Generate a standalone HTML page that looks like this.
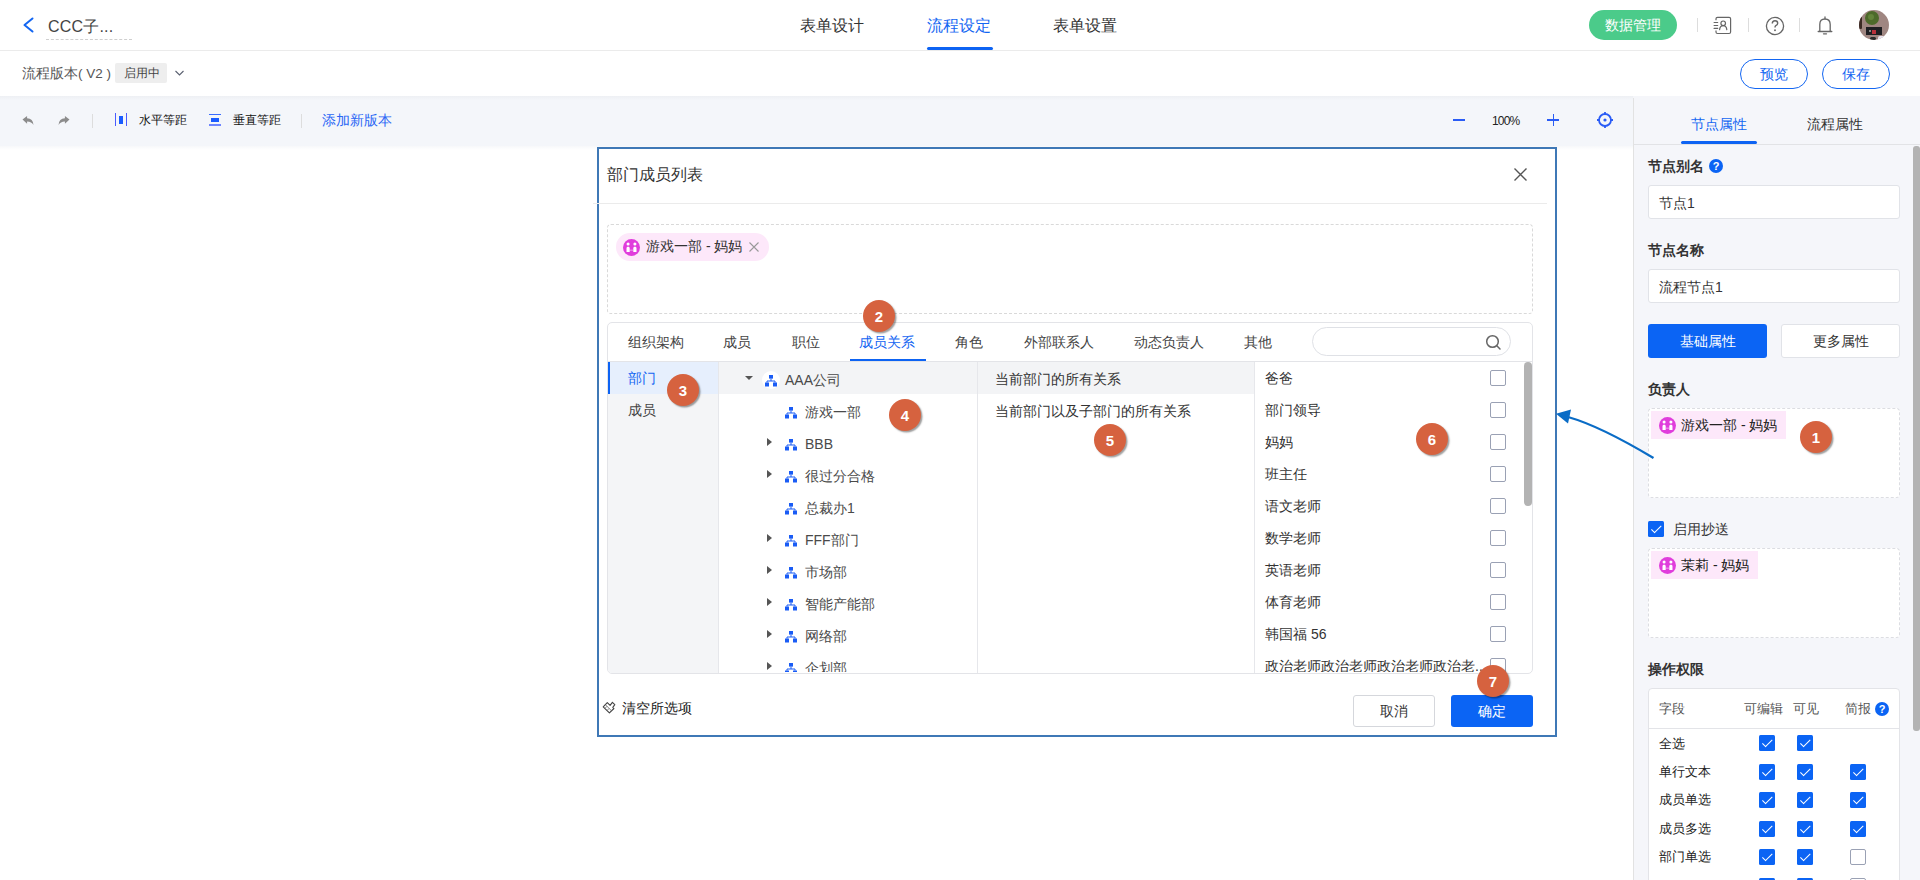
<!DOCTYPE html>
<html><head><meta charset="utf-8">
<style>
*{box-sizing:border-box;margin:0;padding:0}
html,body{width:1920px;height:880px;overflow:hidden;background:#fff;font-family:"Liberation Sans",sans-serif;color:#333}
.abs{position:absolute}
.t{position:absolute;white-space:nowrap;line-height:1}
.badge{position:absolute;width:32px;height:32px;border-radius:50%;background:#d6623f;color:#fff;font-weight:bold;font-size:15px;line-height:33px;text-align:center;box-shadow:1.5px 1.5px 1.5px rgba(0,0,0,.38)}
.cb{position:absolute;width:16px;height:16px;border:1px solid #9aa1b4;border-radius:2px;background:#fff}
.cbc{position:absolute;width:16px;height:16px;border-radius:1.5px;background:#0b64f4}
.cbc:after{content:"";position:absolute;left:5.5px;top:2px;width:4px;height:8.5px;border:solid #fff;border-width:0 1.7px 1.7px 0;transform:rotate(45deg)}
.org{position:absolute;width:12px;height:12px}
.caret-r{position:absolute;width:0;height:0;border-top:4.5px solid transparent;border-bottom:4.5px solid transparent;border-left:5px solid #555}
.tree{font-size:14px;color:#4a4a4a}
</style></head><body>
<!-- ============ header ============ -->
<div class="abs" style="left:0;top:0;width:1920px;height:51px;background:#fff;border-bottom:1px solid #ebebeb"></div>
<svg class="abs" style="left:20px;top:16px" width="16" height="18" viewBox="0 0 16 18"><path d="M12.5 2.5 L4.5 9 L12.5 15.5" fill="none" stroke="#1366f2" stroke-width="2" stroke-linecap="round" stroke-linejoin="round"/></svg>
<div class="t" style="left:48px;top:19px;font-size:16px;color:#444;letter-spacing:.2px">CCC子...</div>
<div class="abs" style="left:46px;top:39px;width:86px;border-top:1px dashed #cfcfcf"></div>
<div class="t" style="left:800px;top:18px;font-size:16px;color:#333">表单设计</div>
<div class="t" style="left:927px;top:18px;font-size:16px;color:#1366f2">流程设定</div>
<div class="abs" style="left:927px;top:47px;width:66px;height:3px;background:#0d63f3;border-radius:2px"></div>
<div class="t" style="left:1053px;top:18px;font-size:16px;color:#333">表单设置</div>
<div class="abs" style="left:1589px;top:10px;width:88px;height:30px;border-radius:15px;background:#4bcb8a"></div>
<div class="t" style="left:1589px;top:18px;width:88px;text-align:center;font-size:14px;color:#fff">数据管理</div>
<div class="abs" style="left:1697px;top:18px;width:1px;height:14px;background:#ddd"></div>
<div class="abs" style="left:1748px;top:18px;width:1px;height:14px;background:#ddd"></div>
<div class="abs" style="left:1799px;top:18px;width:1px;height:14px;background:#ddd"></div>
<!-- contact book icon -->
<svg class="abs" style="left:1706px;top:10px" width="34" height="30" viewBox="0 0 34 30"><path d="M10 10.3 V8.8 Q10 7.3 11.5 7.3 H23.1 Q24.6 7.3 24.6 8.8 V22 Q24.6 23.5 23.1 23.5 H11.5 Q10 23.5 10 22 V20.4" fill="none" stroke="#666" stroke-width="1.2"/><path d="M8.1 12.5 H11.7 M8.1 15.5 H11.7 M8.1 18.4 H11.7" stroke="#666" stroke-width="1.2" stroke-linecap="round"/><circle cx="17.2" cy="13.3" r="2.3" fill="none" stroke="#666" stroke-width="1.2"/><path d="M13.6 19.6 Q14 15.6 17.2 15.6 Q20.4 15.6 20.8 19.6" fill="none" stroke="#666" stroke-width="1.2" stroke-linecap="round"/></svg>
<!-- help icon -->
<svg class="abs" style="left:1764px;top:14.5px" width="22" height="22" viewBox="0 0 22 22"><circle cx="11" cy="11" r="8.6" fill="none" stroke="#666" stroke-width="1.3"/><path d="M8.3 8.6 Q8.3 5.8 11 5.8 Q13.7 5.8 13.7 8.3 Q13.7 9.8 11.8 10.7 Q11 11.2 11 12.6" fill="none" stroke="#666" stroke-width="1.4"/><circle cx="11" cy="15.3" r="0.95" fill="#666"/></svg>
<!-- bell -->
<svg class="abs" style="left:1814px;top:14px" width="22" height="22" viewBox="0 0 22 22"><path d="M4.2 17.5 H17.8 M5.8 17.5 V10.5 Q5.8 5 11 5 Q16.2 5 16.2 10.5 V17.5" fill="none" stroke="#666" stroke-width="1.3" stroke-linecap="round"/><path d="M11 3 V4.6 M9.5 19.8 H12.5" stroke="#666" stroke-width="1.3" stroke-linecap="round"/></svg>
<!-- avatar -->
<div class="abs" style="left:1859px;top:10px;width:30px;height:30px;border-radius:50%;overflow:hidden;background:#9f8681">
  <div class="abs" style="left:0;top:7px;width:3px;height:12px;background:#3b2a24;border-radius:1px"></div>
  <div class="abs" style="left:5.5px;top:1px;width:14px;height:14px;border-radius:50%;background:#4d6a2a"></div>
  <div class="abs" style="left:9px;top:4px;width:6px;height:6px;border-radius:50%;background:#63833a"></div>
  <div class="abs" style="left:7px;top:17px;width:15.5px;height:7.5px;background:#1e1e22"></div>
  <div class="abs" style="left:13px;top:20px;width:3.5px;height:4px;background:#b8303a"></div>
  <div class="abs" style="left:9.5px;top:19.5px;width:2px;height:2px;background:#aaa;border-radius:50%"></div>
  <div class="abs" style="left:11px;top:27px;width:6px;height:3px;background:#2a2a2a;border-radius:2px"></div>
  <div class="abs" style="left:19px;top:26px;width:8px;height:5px;background:#e9e4ee;border-radius:2px"></div>
</div>
<!-- ============ row2 ============ -->
<div class="t" style="left:22px;top:66.5px;font-size:13.5px;color:#555">流程版本( V2 )</div>
<div class="abs" style="left:115px;top:63px;width:52px;height:20px;background:#eee;border-radius:2px"></div>
<div class="t" style="left:124px;top:67px;font-size:12px;color:#444">启用中</div>
<svg class="abs" style="left:174px;top:68.5px" width="11" height="8" viewBox="0 0 11 8"><path d="M1.5 2 L5.5 6 L9.5 2" fill="none" stroke="#5a6070" stroke-width="1.1"/></svg>
<div class="abs" style="left:1740px;top:59px;width:68px;height:30px;border:1px solid #1366f2;border-radius:15px"></div>
<div class="t" style="left:1740px;top:67px;width:68px;text-align:center;font-size:14px;color:#1366f2">预览</div>
<div class="abs" style="left:1822px;top:59px;width:68px;height:30px;border:1px solid #1366f2;border-radius:15px"></div>
<div class="t" style="left:1822px;top:67px;width:68px;text-align:center;font-size:14px;color:#1366f2">保存</div>
<!-- ============ toolbar ============ -->
<div class="abs" style="left:0;top:96px;width:1634px;height:50px;background:linear-gradient(#eef0f4 0px,#f4f6fa 4px,#f4f6fa 100%)"></div><div class="abs" style="left:0;top:146px;width:1634px;height:4px;background:linear-gradient(#f7f8fa,#fff)"></div>
<svg class="abs" style="left:21px;top:114.5px" width="14" height="11" viewBox="0 0 14 12"><path d="M1 5 L6 1 V3.5 Q12.5 3.5 13 11 Q11 7 6 7 V9.5 Z" fill="#8c8c8c"/></svg>
<svg class="abs" style="left:57px;top:114.5px" width="14" height="11" viewBox="0 0 14 12"><path d="M13 5 L8 1 V3.5 Q1.5 3.5 1 11 Q3 7 8 7 V9.5 Z" fill="#8c8c8c"/></svg>
<div class="abs" style="left:92px;top:114px;width:1px;height:14px;background:#ddd"></div>
<div class="abs" style="left:115px;top:113px;width:1px;height:13px;background:#4a5cff"></div>
<div class="abs" style="left:119px;top:115.5px;width:4px;height:8px;background:#1a5cff"></div>
<div class="abs" style="left:126px;top:113px;width:1px;height:13px;background:#4a5cff"></div>
<div class="t" style="left:139px;top:114px;font-size:12px;color:#111">水平等距</div>
<div class="abs" style="left:209px;top:114px;width:12px;height:1px;background:#3a6cff"></div>
<div class="abs" style="left:211px;top:118px;width:8px;height:4px;background:#1a5cff"></div>
<div class="abs" style="left:209px;top:124px;width:12px;height:2px;background:#6f86ff"></div>
<div class="t" style="left:233px;top:114px;font-size:12px;color:#111">垂直等距</div>
<div class="abs" style="left:301px;top:114px;width:1px;height:14px;background:#ddd"></div>
<div class="t" style="left:322px;top:113px;font-size:14px;color:#2a66f5">添加新版本</div>
<div class="abs" style="left:1453px;top:119px;width:12px;height:1.5px;background:#2a5cf5"></div>
<div class="t" style="left:1492px;top:115px;font-size:12px;color:#222;letter-spacing:-.8px">100%</div>
<div class="abs" style="left:1547px;top:119px;width:12px;height:1.5px;background:#2a5cf5"></div>
<div class="abs" style="left:1552.5px;top:114px;width:1.5px;height:12px;background:#2a5cf5"></div>
<svg class="abs" style="left:1596px;top:111px" width="18" height="18" viewBox="0 0 18 18"><circle cx="9" cy="9" r="6" fill="none" stroke="#2a5cf5" stroke-width="1.8"/><circle cx="9" cy="9" r="1.6" fill="#2a5cf5"/><path d="M9 1v3M9 14v3M1 9h3M14 9h3" stroke="#2a5cf5" stroke-width="1.8"/></svg>
<!-- ============ right panel ============ -->
<div class="abs" style="left:1633px;top:96px;width:287px;height:784px;background:#f5f6fa"></div>
<div class="abs" style="left:1633px;top:98px;width:1px;height:782px;background:#e2e2e2"></div>
<div class="abs" style="left:1634px;top:144px;width:286px;height:1px;background:#e2e3e6"></div>
<div class="t" style="left:1691px;top:117px;font-size:14px;color:#1366f2">节点属性</div>
<div class="abs" style="left:1681px;top:141px;width:76px;height:3px;background:#0d63f3;border-radius:2px"></div>
<div class="t" style="left:1807px;top:117px;font-size:14px;color:#333">流程属性</div>
<div class="abs" style="left:1913px;top:146px;width:7px;height:585px;background:#b3b3b3;border-radius:3px"></div>

<div class="t" style="left:1648px;top:159px;font-size:14px;font-weight:bold;color:#333">节点别名</div>
<div class="abs" style="left:1709px;top:159px;width:14px;height:14px;border-radius:50%;background:#0b64f4;color:#fff;font-size:11px;font-weight:bold;text-align:center;line-height:14px">?</div>
<div class="abs" style="left:1648px;top:185px;width:252px;height:34px;background:#fff;border:1px solid #e1e3e8;border-radius:3px"></div>
<div class="t" style="left:1659px;top:196px;font-size:14px;color:#333">节点1</div>
<div class="t" style="left:1648px;top:243px;font-size:14px;font-weight:bold;color:#333">节点名称</div>
<div class="abs" style="left:1648px;top:269px;width:252px;height:34px;background:#fff;border:1px solid #e1e3e8;border-radius:3px"></div>
<div class="t" style="left:1659px;top:280px;font-size:14px;color:#333">流程节点1</div>
<div class="abs" style="left:1648px;top:324px;width:119px;height:34px;background:#0b64f4;border-radius:3px"></div>
<div class="t" style="left:1648px;top:334px;width:119px;text-align:center;font-size:14px;color:#fff">基础属性</div>
<div class="abs" style="left:1781px;top:324px;width:119px;height:34px;background:#fff;border:1px solid #e1e3e8;border-radius:3px"></div>
<div class="t" style="left:1781px;top:334px;width:119px;text-align:center;font-size:14px;color:#333">更多属性</div>
<div class="t" style="left:1648px;top:382px;font-size:14px;font-weight:bold;color:#333">负责人</div>
<div class="abs" style="left:1648px;top:408px;width:252px;height:90px;background:#fff;border:1px dashed #dcdde2;border-radius:4px"></div>
<div class="abs" style="left:1651px;top:411px;width:135px;height:28px;background:#fde8fa"></div>
<svg class="abs" style="left:1658.5px;top:416.5px" width="17" height="17" viewBox="0 0 16 16"><circle cx="8" cy="8" r="8" fill="#e03ddc"/><circle cx="4.8" cy="4.7" r="1.45" fill="#fff"/><circle cx="11.2" cy="4.7" r="1.45" fill="#fff"/><path d="M4.1 7.3h1.4l.8.9v4H3.3V8.2z M10.5 7.3h1.4l.8.9v4H9.7V8.2z" fill="#fff"/><path d="M6.4 10.5h3.2" stroke="#fff" stroke-width=".6" opacity=".8"/></svg>
<div class="t" style="left:1681px;top:418px;font-size:14px;color:#222">游戏一部 - 妈妈</div>
<div class="cbc" style="left:1648px;top:521px"></div>
<div class="t" style="left:1673px;top:522px;font-size:14px;color:#333">启用抄送</div>
<div class="abs" style="left:1648px;top:548px;width:252px;height:90px;background:#fff;border:1px dashed #dcdde2;border-radius:4px"></div>
<div class="abs" style="left:1651px;top:551px;width:107px;height:28px;background:#fde8fa"></div>
<svg class="abs" style="left:1658.5px;top:556.5px" width="17" height="17" viewBox="0 0 16 16"><circle cx="8" cy="8" r="8" fill="#e03ddc"/><circle cx="4.8" cy="4.7" r="1.45" fill="#fff"/><circle cx="11.2" cy="4.7" r="1.45" fill="#fff"/><path d="M4.1 7.3h1.4l.8.9v4H3.3V8.2z M10.5 7.3h1.4l.8.9v4H9.7V8.2z" fill="#fff"/><path d="M6.4 10.5h3.2" stroke="#fff" stroke-width=".6" opacity=".8"/></svg>
<div class="t" style="left:1681px;top:558px;font-size:14px;color:#222">茉莉 - 妈妈</div>
<div class="t" style="left:1648px;top:662px;font-size:14px;font-weight:bold;color:#333">操作权限</div>
<div class="abs" style="left:1648px;top:688px;width:252px;height:220px;background:#fff;border:1px solid #e3e4e8;border-radius:4px"></div>
<div class="abs" style="left:1649px;top:728px;width:250px;height:1px;background:#e3e4e8"></div>
<div class="t" style="left:1659px;top:702px;font-size:13px;color:#555">字段</div>
<div class="t" style="left:1744px;top:702px;font-size:13px;color:#555">可编辑</div>
<div class="t" style="left:1793px;top:702px;font-size:13px;color:#555">可见</div>
<div class="t" style="left:1845px;top:702px;font-size:13px;color:#555">简报</div>
<div class="abs" style="left:1875px;top:702px;width:14px;height:14px;border-radius:50%;background:#0b64f4;color:#fff;font-size:11px;font-weight:bold;text-align:center;line-height:14px">?</div>
<div class="t" style="left:1659px;top:737px;font-size:13px;color:#222">全选</div>
<div class="t" style="left:1659px;top:765px;font-size:13px;color:#222">单行文本</div>
<div class="t" style="left:1659px;top:793px;font-size:13px;color:#222">成员单选</div>
<div class="t" style="left:1659px;top:822px;font-size:13px;color:#222">成员多选</div>
<div class="t" style="left:1659px;top:850px;font-size:13px;color:#222">部门单选</div>
<div class="cbc" style="left:1759px;top:735px"></div><div class="cbc" style="left:1797px;top:735px"></div>
<div class="cbc" style="left:1759px;top:764px"></div><div class="cbc" style="left:1797px;top:764px"></div><div class="cbc" style="left:1850px;top:764px"></div>
<div class="cbc" style="left:1759px;top:792px"></div><div class="cbc" style="left:1797px;top:792px"></div><div class="cbc" style="left:1850px;top:792px"></div>
<div class="cbc" style="left:1759px;top:821px"></div><div class="cbc" style="left:1797px;top:821px"></div><div class="cbc" style="left:1850px;top:821px"></div>
<div class="cbc" style="left:1759px;top:849px"></div><div class="cbc" style="left:1797px;top:849px"></div><div class="cb" style="left:1850px;top:849px"></div>
<div class="cbc" style="left:1759px;top:878px"></div><div class="cbc" style="left:1797px;top:878px"></div><div class="cb" style="left:1850px;top:878px"></div>
<div class="badge" style="left:1800px;top:421px">1</div>

<!-- ============ dialog ============ -->
<div class="abs" style="left:597px;top:147px;width:960px;height:590px;background:#fff;border:2px solid #3f78b6"></div>
<div class="t" style="left:607px;top:167px;font-size:16px;font-weight:500;color:#333">部门成员列表</div>
<svg class="abs" style="left:1512px;top:166px" width="17" height="17" viewBox="0 0 17 17"><path d="M2.5 2.5L14.5 14.5M14.5 2.5L2.5 14.5" stroke="#555" stroke-width="1.4"/></svg>
<div class="abs" style="left:593px;top:203px;width:954px;height:1px;background:#ebebeb"></div>
<div class="abs" style="left:607px;top:224px;width:926px;height:90px;border:1px dashed #d9d9d9;border-radius:4px"></div>
<div class="abs" style="left:616px;top:233px;width:153px;height:28px;background:#fde8fa;border-radius:14px"></div>
<svg class="abs" style="left:623px;top:239px" width="17" height="17" viewBox="0 0 16 16"><circle cx="8" cy="8" r="8" fill="#e03ddc"/><circle cx="4.8" cy="4.7" r="1.45" fill="#fff"/><circle cx="11.2" cy="4.7" r="1.45" fill="#fff"/><path d="M4.1 7.3h1.4l.8.9v4H3.3V8.2z M10.5 7.3h1.4l.8.9v4H9.7V8.2z" fill="#fff"/><path d="M6.4 10.5h3.2" stroke="#fff" stroke-width=".6" opacity=".8"/></svg>
<div class="t" style="left:646px;top:239px;font-size:14px;color:#333">游戏一部 - 妈妈</div>
<svg class="abs" style="left:748px;top:241px" width="12" height="12" viewBox="0 0 12 12"><path d="M1.5 1.5L10.5 10.5M10.5 1.5L1.5 10.5" stroke="#999" stroke-width="1.1"/></svg>

<div class="abs" style="left:607px;top:322px;width:926px;height:352px;border:1px solid #e3e4e8;border-radius:5px"></div>
<div class="abs" style="left:608px;top:361px;width:924px;height:1px;background:#e3e4e8"></div>
<div class="t" style="left:628px;top:335px;font-size:14px;color:#444">组织架构</div>
<div class="t" style="left:723px;top:335px;font-size:14px;color:#444">成员</div>
<div class="t" style="left:792px;top:335px;font-size:14px;color:#444">职位</div>
<div class="t" style="left:859px;top:335px;font-size:14px;color:#1366f2">成员关系</div>
<div class="abs" style="left:850px;top:359px;width:76px;height:2px;background:#0d63f3"></div>
<div class="t" style="left:955px;top:335px;font-size:14px;color:#444">角色</div>
<div class="t" style="left:1024px;top:335px;font-size:14px;color:#444">外部联系人</div>
<div class="t" style="left:1134px;top:335px;font-size:14px;color:#444">动态负责人</div>
<div class="t" style="left:1244px;top:335px;font-size:14px;color:#444">其他</div>
<div class="abs" style="left:1312px;top:327px;width:199px;height:29px;border:1px solid #dfe1e6;border-radius:15px;background:#fff"></div>
<svg class="abs" style="left:1485px;top:334px" width="17" height="17" viewBox="0 0 17 17"><circle cx="7.5" cy="7.5" r="5.8" fill="none" stroke="#666" stroke-width="1.5"/><path d="M11.8 11.8L15 15" stroke="#666" stroke-width="1.5" stroke-linecap="round"/></svg>

<!-- left column -->
<div class="abs" style="left:608px;top:362px;width:111px;height:311px;background:#f4f5f7;border-right:1px solid #e6e7eb;border-bottom-left-radius:4px"></div>
<div class="abs" style="left:608px;top:362px;width:110px;height:32px;background:#e6effd"></div>
<div class="abs" style="left:608px;top:362px;width:2px;height:32px;background:#0d63f3"></div>
<div class="t" style="left:628px;top:371px;font-size:14px;color:#1366f2">部门</div>
<div class="t" style="left:628px;top:403px;font-size:14px;color:#444">成员</div>
<!-- tree column -->
<div class="abs" style="left:719px;top:362px;width:258px;height:32px;background:#f3f4f6"></div>
<div class="abs" style="left:977px;top:362px;width:1px;height:311px;background:#e6e7eb"></div>
<div class="abs" style="left:1254px;top:362px;width:1px;height:311px;background:#e6e7eb"></div>
<div class="abs" style="left:745px;top:376px;width:0;height:0;border-left:4px solid transparent;border-right:4px solid transparent;border-top:4.5px solid #555"></div>
<div class="abs" style="left:762px;top:371px;width:18px;height:18px;border-radius:50%;background:#fff"></div>
<div style="position:absolute;left:0;top:0;width:1920px;height:880px;clip-path:inset(362px 0 208px 0)"><svg class="org" style="left:765px;top:374.5px" width="12" height="12" viewBox="0 0 12 12"><rect x="4" y="0" width="4" height="3.6" fill="#1a5cf5"/><path d="M6 3.5v2.5M2 7.6V6h8v1.6" fill="none" stroke="#1a5cf5" stroke-width="1"/><rect x="0" y="7.5" width="4" height="4" fill="#1a5cf5"/><rect x="8" y="7.5" width="4" height="4" fill="#1a5cf5"/></svg><div class="t tree" style="left:785px;top:373px">AAA公司</div><svg class="org" style="left:785px;top:406.5px" width="12" height="12" viewBox="0 0 12 12"><rect x="4" y="0" width="4" height="3.6" fill="#1a5cf5"/><path d="M6 3.5v2.5M2 7.6V6h8v1.6" fill="none" stroke="#1a5cf5" stroke-width="1"/><rect x="0" y="7.5" width="4" height="4" fill="#1a5cf5"/><rect x="8" y="7.5" width="4" height="4" fill="#1a5cf5"/></svg><div class="t tree" style="left:805px;top:405px">游戏一部</div><div class="caret-r" style="left:767px;top:438px"></div><svg class="org" style="left:785px;top:438.5px" width="12" height="12" viewBox="0 0 12 12"><rect x="4" y="0" width="4" height="3.6" fill="#1a5cf5"/><path d="M6 3.5v2.5M2 7.6V6h8v1.6" fill="none" stroke="#1a5cf5" stroke-width="1"/><rect x="0" y="7.5" width="4" height="4" fill="#1a5cf5"/><rect x="8" y="7.5" width="4" height="4" fill="#1a5cf5"/></svg><div class="t tree" style="left:805px;top:437px">BBB</div><div class="caret-r" style="left:767px;top:470px"></div><svg class="org" style="left:785px;top:470.5px" width="12" height="12" viewBox="0 0 12 12"><rect x="4" y="0" width="4" height="3.6" fill="#1a5cf5"/><path d="M6 3.5v2.5M2 7.6V6h8v1.6" fill="none" stroke="#1a5cf5" stroke-width="1"/><rect x="0" y="7.5" width="4" height="4" fill="#1a5cf5"/><rect x="8" y="7.5" width="4" height="4" fill="#1a5cf5"/></svg><div class="t tree" style="left:805px;top:469px">很过分合格</div><svg class="org" style="left:785px;top:502.5px" width="12" height="12" viewBox="0 0 12 12"><rect x="4" y="0" width="4" height="3.6" fill="#1a5cf5"/><path d="M6 3.5v2.5M2 7.6V6h8v1.6" fill="none" stroke="#1a5cf5" stroke-width="1"/><rect x="0" y="7.5" width="4" height="4" fill="#1a5cf5"/><rect x="8" y="7.5" width="4" height="4" fill="#1a5cf5"/></svg><div class="t tree" style="left:805px;top:501px">总裁办1</div><div class="caret-r" style="left:767px;top:534px"></div><svg class="org" style="left:785px;top:534.5px" width="12" height="12" viewBox="0 0 12 12"><rect x="4" y="0" width="4" height="3.6" fill="#1a5cf5"/><path d="M6 3.5v2.5M2 7.6V6h8v1.6" fill="none" stroke="#1a5cf5" stroke-width="1"/><rect x="0" y="7.5" width="4" height="4" fill="#1a5cf5"/><rect x="8" y="7.5" width="4" height="4" fill="#1a5cf5"/></svg><div class="t tree" style="left:805px;top:533px">FFF部门</div><div class="caret-r" style="left:767px;top:566px"></div><svg class="org" style="left:785px;top:566.5px" width="12" height="12" viewBox="0 0 12 12"><rect x="4" y="0" width="4" height="3.6" fill="#1a5cf5"/><path d="M6 3.5v2.5M2 7.6V6h8v1.6" fill="none" stroke="#1a5cf5" stroke-width="1"/><rect x="0" y="7.5" width="4" height="4" fill="#1a5cf5"/><rect x="8" y="7.5" width="4" height="4" fill="#1a5cf5"/></svg><div class="t tree" style="left:805px;top:565px">市场部</div><div class="caret-r" style="left:767px;top:598px"></div><svg class="org" style="left:785px;top:598.5px" width="12" height="12" viewBox="0 0 12 12"><rect x="4" y="0" width="4" height="3.6" fill="#1a5cf5"/><path d="M6 3.5v2.5M2 7.6V6h8v1.6" fill="none" stroke="#1a5cf5" stroke-width="1"/><rect x="0" y="7.5" width="4" height="4" fill="#1a5cf5"/><rect x="8" y="7.5" width="4" height="4" fill="#1a5cf5"/></svg><div class="t tree" style="left:805px;top:597px">智能产能部</div><div class="caret-r" style="left:767px;top:630px"></div><svg class="org" style="left:785px;top:630.5px" width="12" height="12" viewBox="0 0 12 12"><rect x="4" y="0" width="4" height="3.6" fill="#1a5cf5"/><path d="M6 3.5v2.5M2 7.6V6h8v1.6" fill="none" stroke="#1a5cf5" stroke-width="1"/><rect x="0" y="7.5" width="4" height="4" fill="#1a5cf5"/><rect x="8" y="7.5" width="4" height="4" fill="#1a5cf5"/></svg><div class="t tree" style="left:805px;top:629px">网络部</div><div class="caret-r" style="left:767px;top:662px"></div><svg class="org" style="left:785px;top:662.5px" width="12" height="12" viewBox="0 0 12 12"><rect x="4" y="0" width="4" height="3.6" fill="#1a5cf5"/><path d="M6 3.5v2.5M2 7.6V6h8v1.6" fill="none" stroke="#1a5cf5" stroke-width="1"/><rect x="0" y="7.5" width="4" height="4" fill="#1a5cf5"/><rect x="8" y="7.5" width="4" height="4" fill="#1a5cf5"/></svg><div class="t tree" style="left:805px;top:661px">企划部</div></div>
<!-- relation column -->
<div class="abs" style="left:978px;top:362px;width:276px;height:32px;background:#f3f4f6"></div>
<div class="t" style="left:995px;top:372px;font-size:14px;color:#333">当前部门的所有关系</div>
<div class="t" style="left:995px;top:404px;font-size:14px;color:#333">当前部门以及子部门的所有关系</div>
<!-- right list -->
<div style="position:absolute;left:0;top:0;width:1920px;height:880px;clip-path:inset(362px 0 208px 0)"><div class="t" style="left:1265px;top:371px;font-size:14px;color:#333">爸爸</div><div class="cb" style="left:1490px;top:370px"></div><div class="t" style="left:1265px;top:403px;font-size:14px;color:#333">部门领导</div><div class="cb" style="left:1490px;top:402px"></div><div class="t" style="left:1265px;top:435px;font-size:14px;color:#333">妈妈</div><div class="cb" style="left:1490px;top:434px"></div><div class="t" style="left:1265px;top:467px;font-size:14px;color:#333">班主任</div><div class="cb" style="left:1490px;top:466px"></div><div class="t" style="left:1265px;top:499px;font-size:14px;color:#333">语文老师</div><div class="cb" style="left:1490px;top:498px"></div><div class="t" style="left:1265px;top:531px;font-size:14px;color:#333">数学老师</div><div class="cb" style="left:1490px;top:530px"></div><div class="t" style="left:1265px;top:563px;font-size:14px;color:#333">英语老师</div><div class="cb" style="left:1490px;top:562px"></div><div class="t" style="left:1265px;top:595px;font-size:14px;color:#333">体育老师</div><div class="cb" style="left:1490px;top:594px"></div><div class="t" style="left:1265px;top:627px;font-size:14px;color:#333">韩国福 56</div><div class="cb" style="left:1490px;top:626px"></div><div class="t" style="left:1265px;top:659px;font-size:14px;color:#333">政治老师政治老师政治老师政治老...</div><div class="cb" style="left:1490px;top:658px"></div></div>
<div class="abs" style="left:1524px;top:362px;width:8px;height:144px;background:#b3b3b3;border-radius:4px"></div>

<!-- footer -->
<svg class="abs" style="left:598px;top:692px" width="24" height="28" viewBox="0 0 24 28"><path d="M5.2 14.9 L9.3 10.6 L12.1 13.4 L14.4 10.3 L16.8 12.6 L14.8 15.3 L15.9 16.5 L11.4 20.9 Z" fill="none" stroke="#444" stroke-width="1.1" stroke-linejoin="round"/><path d="M7.4 12.7 L13.6 18.9 M6.7 16.6 L9.1 14.2 M8.9 18.6 L11.1 16.4" stroke="#666" stroke-width=".8"/></svg>
<div class="t" style="left:622px;top:701px;font-size:14px;color:#222">清空所选项</div>
<div class="abs" style="left:1353px;top:695px;width:82px;height:32px;border:1px solid #d5d7dc;border-radius:3px;background:#fff"></div>
<div class="t" style="left:1353px;top:704px;width:82px;text-align:center;font-size:14px;color:#333">取消</div>
<div class="abs" style="left:1451px;top:695px;width:82px;height:32px;background:#0b64f4;border-radius:3px"></div>
<div class="t" style="left:1451px;top:704px;width:82px;text-align:center;font-size:14px;font-weight:500;color:#fff">确定</div>

<div class="badge" style="left:863px;top:300px">2</div>
<div class="badge" style="left:667px;top:374px">3</div>
<div class="badge" style="left:889px;top:399px">4</div>
<div class="badge" style="left:1094px;top:424px">5</div>
<div class="badge" style="left:1416px;top:423px">6</div>
<div class="badge" style="left:1477px;top:665px">7</div>

<!-- arrow -->
<svg class="abs" style="left:1540px;top:390px" width="130" height="80" viewBox="1540 390 130 80"><path d="M1568 417 Q1600 426 1653.5 458" fill="none" stroke="#0a6cc6" stroke-width="2.3"/><path d="M1556 413.8 L1571 409.5 L1568 423.5 Z" fill="#0a6cc6"/></svg>
</body></html>
